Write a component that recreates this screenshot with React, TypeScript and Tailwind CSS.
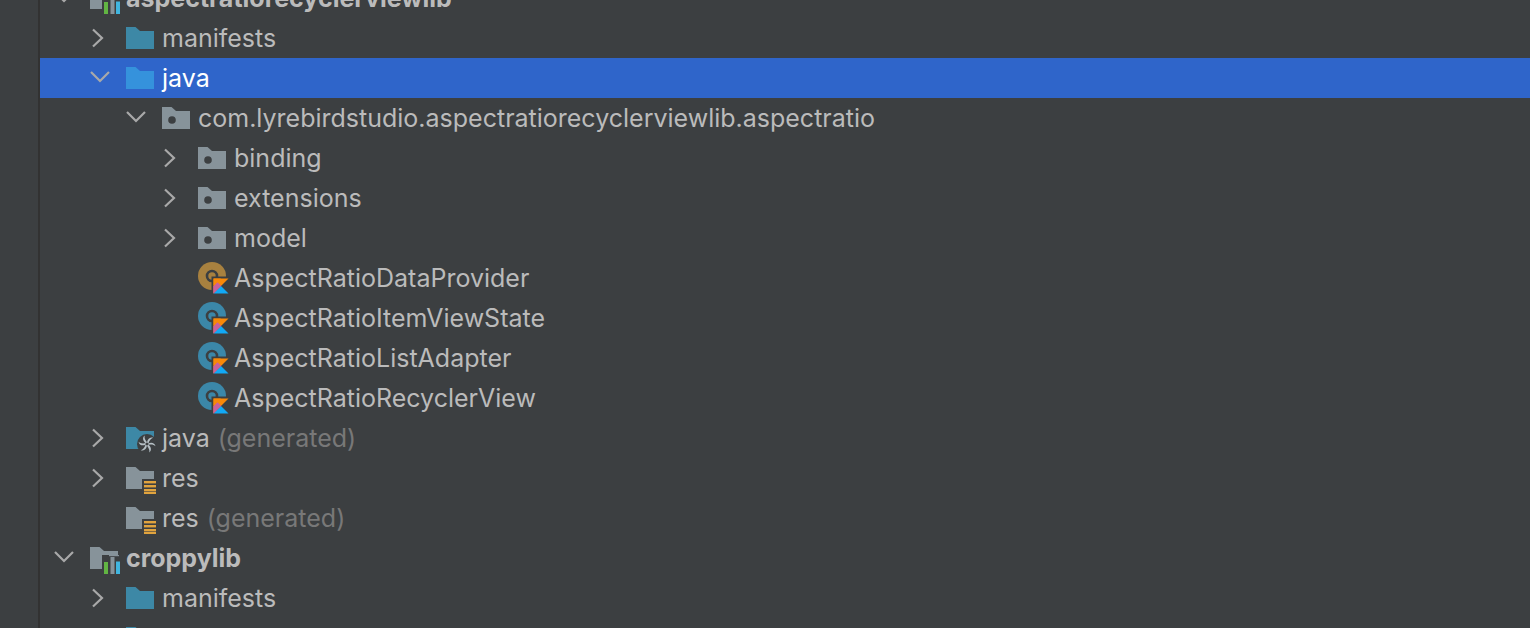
import React from "react";

const Folder = ({ fill }: { fill: string }) => (
  <path d="M0 0H9.5L14 4H28V22H0Z" fill={fill} />
);

const Kotlin = ({ x, y }: { x: number; y: number }) => (
  <g transform={`translate(${x} ${y})`}>
    <rect x="-2" y="-2" width="19" height="19" fill="#3c3f41" />
    <path d="M0 0H15L7.5 7.5L0 15Z" fill="#f88909" />
    <path d="M0 0H7.5L0 7.5Z" fill="#f88909" />
    <path d="M0 15L7.5 7.5L4 4L0 8Z" fill="#d8598f" />
    <path d="M0 15V7.5L7.5 0H15Z" fill="#e0657a" opacity="0" />
    <path d="M7.5 7.5L15 15H0Z" fill="#12a9f5" />
    <path d="M0 15V8L4 4L7.5 7.5Z" fill="#c9619a" />
  </g>
);

type IconKind = "module" | "src" | "srcSel" | "pkg" | "obj" | "cls" | "gen" | "res";

const Icon = ({ kind }: { kind: IconKind }) => {
  const common = { width: 36, height: 32, viewBox: "0 0 36 32", className: "shrink-0" };
  if (kind === "src" || kind === "srcSel")
    return (
      <svg {...common}>
        <g transform="translate(0 5)">
          <Folder fill={kind === "src" ? "#3d88a6" : "#3592dc"} />
        </g>
      </svg>
    );
  if (kind === "pkg")
    return (
      <svg {...common}>
        <g transform="translate(0 5)">
          <Folder fill="#87939a" />
          <circle cx="10" cy="13" r="3.8" fill="#3c3f41" />
        </g>
      </svg>
    );
  if (kind === "obj" || kind === "cls") {
    const c = kind === "obj" ? "#a8813f" : "#3b87a8";
    return (
      <svg {...common}>
        <circle cx="14" cy="14" r="14" fill={c} />
        <circle cx="14" cy="14" r="5" fill="none" stroke="#3c3f41" strokeWidth="2.6" />
        <Kotlin x={15.5} y={16.5} />
      </svg>
    );
  }
  if (kind === "gen")
    return (
      <svg {...common}>
        <g transform="translate(0 5)">
          <Folder fill="#3d88a6" />
        </g>
        <circle cx="21" cy="22" r="10" fill="#3c3f41" />
        <g transform="translate(21 22)" fill="#b6c0c6">
          {[0, 60, 120, 180, 240, 300].map((a) => (
            <path key={a} d="M0 -1.6C0.5 -5 3 -7.5 6.2 -6.2C4 -5.6 2.4 -3.6 1.5 -0.8Z" transform={`rotate(${a})`} />
          ))}
        </g>
      </svg>
    );
  if (kind === "res")
    return (
      <svg {...common}>
        <g transform="translate(0 5)">
          <Folder fill="#87939a" />
        </g>
        <rect x="16" y="17" width="15" height="15" fill="#3c3f41" />
        {[20, 24, 28].map((y) => (
          <rect key={y} x="18" y={y - 1} width="12" height="2.4" fill="#e0a33e" />
        ))}
        <rect x="18" y="30" width="12" height="2" fill="#e0a33e" />
      </svg>
    );
  return (
    <svg {...common}>
      <g transform="translate(0 5)">
        <Folder fill="#87939a" />
      </g>
      <rect x="12" y="13" width="18" height="19" fill="#3c3f41" />
      <path d="M19 13.6H29" stroke="#87939a" strokeWidth="1.2" fill="none" />
      <rect x="14" y="20" width="4" height="12" fill="#62b543" />
      <rect x="20.5" y="15" width="4" height="17" fill="#87939a" />
      <rect x="26" y="19.5" width="4" height="12.5" fill="#40b6e0" />
    </svg>
  );
};

const Chevron = ({ open }: { open?: boolean }) => (
  <span className="w-[38px] h-full flex items-start shrink-0">
    {open === undefined ? null : open ? (
      <svg width="22" height="14" viewBox="0 0 22 14" className="ml-[1px] mt-[12px]">
        <path d="M2 2L11 11L20 2" fill="none" stroke="#a9a9a9" strokeWidth="2.2" />
      </svg>
    ) : (
      <svg width="14" height="20" viewBox="0 0 14 20" className="ml-[3px] mt-[10px]">
        <path d="M2 1.5L11 10L2 18.5" fill="none" stroke="#a9a9a9" strokeWidth="2.2" />
      </svg>
    )}
  </span>
);

type RowT = {
  d: number;
  open?: boolean;
  icon: IconKind;
  text: string;
  suffix?: string;
  bold?: boolean;
  sel?: boolean;
};

const rows: RowT[] = [
  { d: 0, open: true, icon: "module", text: "aspectratiorecyclerviewlib", bold: true },
  { d: 1, open: false, icon: "src", text: "manifests" },
  { d: 1, open: true, icon: "srcSel", text: "java", sel: true },
  { d: 2, open: true, icon: "pkg", text: "com.lyrebirdstudio.aspectratiorecyclerviewlib.aspectratio" },
  { d: 3, open: false, icon: "pkg", text: "binding" },
  { d: 3, open: false, icon: "pkg", text: "extensions" },
  { d: 3, open: false, icon: "pkg", text: "model" },
  { d: 3, icon: "obj", text: "AspectRatioDataProvider" },
  { d: 3, icon: "cls", text: "AspectRatioItemViewState" },
  { d: 3, icon: "cls", text: "AspectRatioListAdapter" },
  { d: 3, icon: "cls", text: "AspectRatioRecyclerView" },
  { d: 1, open: false, icon: "gen", text: "java", suffix: "(generated)" },
  { d: 1, open: false, icon: "res", text: "res" },
  { d: 1, icon: "res", text: "res", suffix: "(generated)" },
  { d: 0, open: true, icon: "module", text: "croppylib", bold: true },
  { d: 1, open: false, icon: "src", text: "manifests" },
  { d: 1, open: false, icon: "src", text: "java" },
];

const indent: Record<number, string> = {
  0: "pl-[12px]",
  1: "pl-[48px]",
  2: "pl-[84px]",
  3: "pl-[120px]",
};

export default function App() {
  return (
    <div className="flex w-[1530px] h-[628px] overflow-hidden bg-[#3c3f41] font-['Inter','Liberation_Sans',sans-serif]">
      <div className="w-[40px] shrink-0 h-full bg-[#3c3f41] border-r-2 border-[#323232]" />
      <div className="flex-1 flex flex-col -mt-[22px]">
        {rows.map((r, i) => (
          <div
            key={i}
            className={`h-[40px] shrink-0 flex items-center ${indent[r.d]} ${r.sel ? "bg-[#2f65ca]" : ""}`}
          >
            <Chevron open={r.open} />
            <Icon kind={r.icon} />
            <span
              className={`text-[25px] whitespace-nowrap leading-[40px] ${r.sel ? "text-white" : "text-[#bbbbbb]"} ${r.bold ? "font-bold" : ""}`}
            >
              {r.text}
            </span>
            {r.suffix ? <span className="text-[25px] leading-[40px] ml-[8px] text-[#787878] whitespace-nowrap">{r.suffix}</span> : null}
          </div>
        ))}
      </div>
    </div>
  );
}
